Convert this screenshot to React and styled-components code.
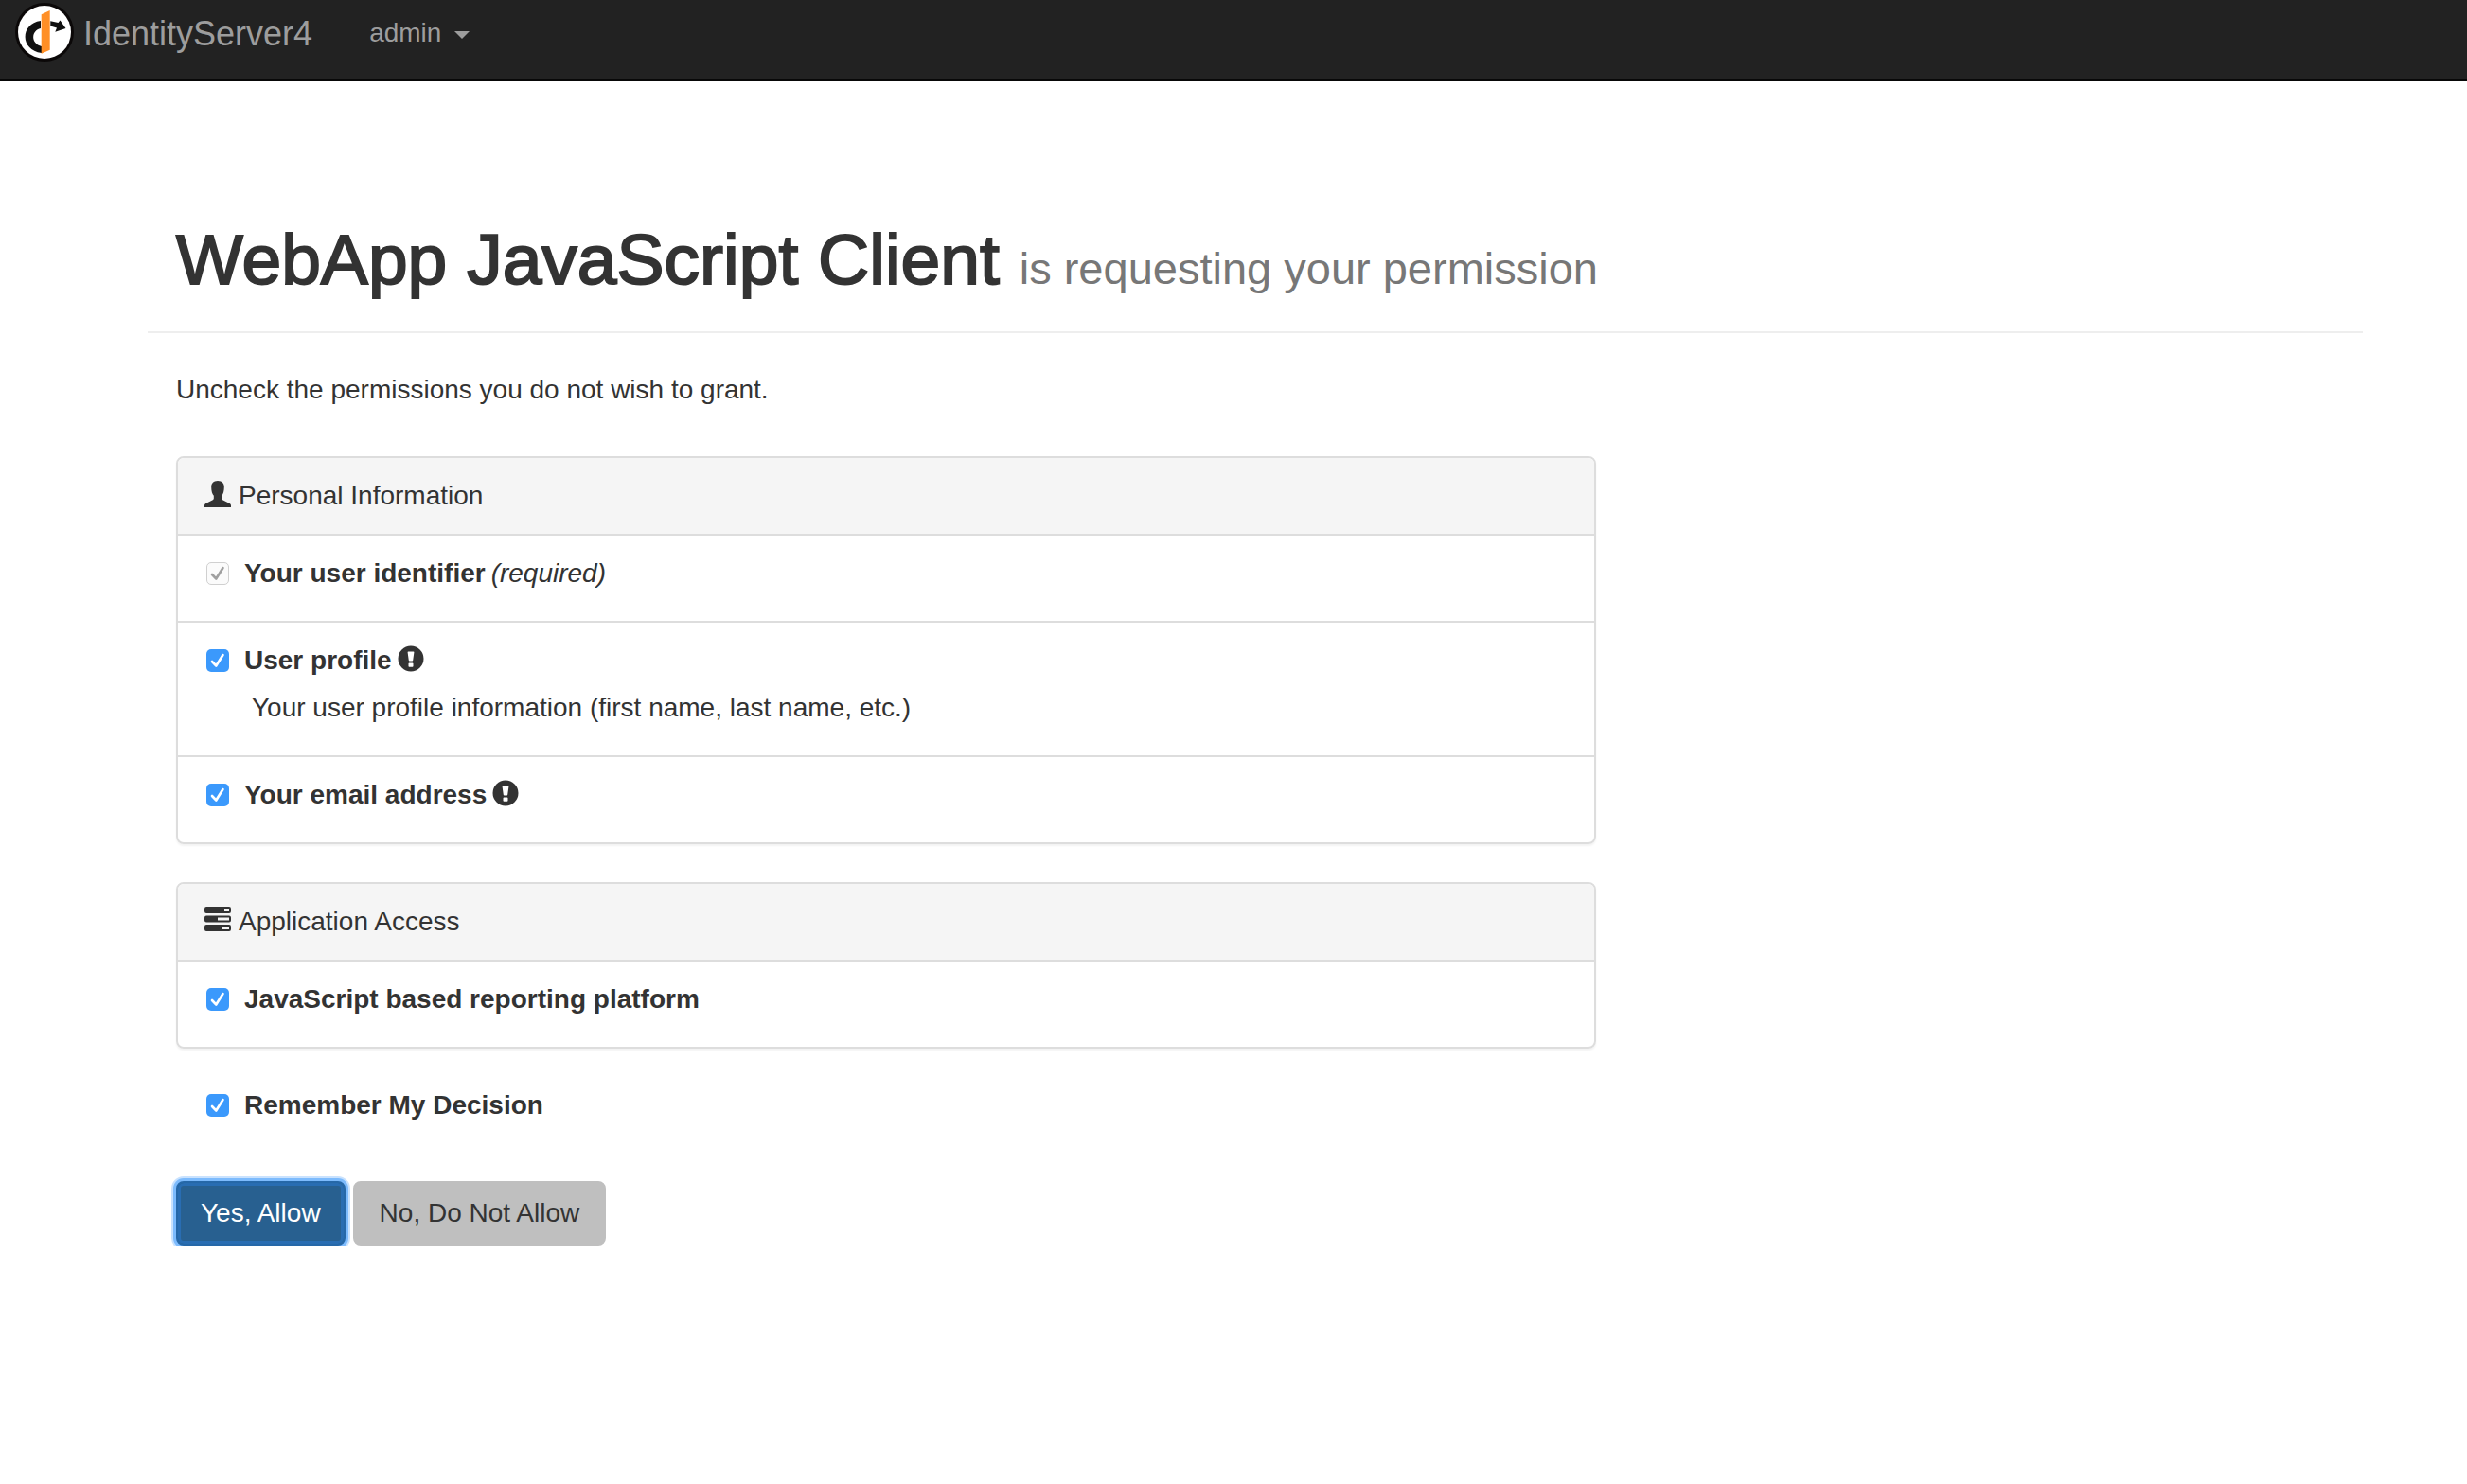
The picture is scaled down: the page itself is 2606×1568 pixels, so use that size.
import React from "react";
import styled, { createGlobalStyle, css } from "styled-components";

const GlobalStyle = createGlobalStyle`
  *, *::before, *::after { box-sizing: border-box; }
  body {
    margin: 0;
    background: #fff;
    color: #333;
    font-family: "Liberation Sans", "Helvetica Neue", Helvetica, Arial, sans-serif;
    font-size: 28px;
    line-height: 40px;
  }
`;

const Navbar = styled.header`
  display: flex;
  align-items: flex-start;
  height: 86px;
  padding: 0 16px;
  background: #222;
  border-bottom: 2px solid #080808;
`;

const Brand = styled.a`
  display: flex;
  align-items: center;
  gap: 10px;
  height: 72px;
  color: #9d9d9d;
  font-size: 36px;
  text-decoration: none;
`;

const Logo = styled.svg`
  width: 62px;
  height: 62px;
  margin-bottom: 4px;
`;

const UserMenu = styled.button`
  display: flex;
  align-items: center;
  gap: 14px;
  height: 70px;
  margin-left: 60px;
  padding: 0;
  border: 0;
  background: none;
  color: #9d9d9d;
  font: inherit;
  cursor: pointer;
`;

const Caret = styled.span`
  margin-top: 4px;
  border-top: 8px solid currentColor;
  border-left: 8px solid transparent;
  border-right: 8px solid transparent;
`;

const Page = styled.main`
  padding: 136px 110px 0 156px;
`;

const PageHeader = styled.div`
  padding: 12px 30px 36px;
  border-bottom: 2px solid #eee;
`;

const Title = styled.h1`
  margin: 0;
  font-size: 75px;
  font-weight: 400;
  line-height: 80px;
  -webkit-text-stroke: 2px currentColor;
`;

const Subtitle = styled.small`
  color: #777;
  font-size: 47px;
  line-height: 48px;
  -webkit-text-stroke: 0;
`;

const Form = styled.form`
  width: 66.6667%;
  padding: 0 30px;
`;

const Intro = styled.p`
  margin: 40px 0 50px;
`;

const Panel = styled.section`
  margin-bottom: 40px;
  border: 2px solid #ddd;
  border-radius: 8px;
  box-shadow: 0 2px 2px rgba(0, 0, 0, 0.05);
  overflow: hidden;
`;

const PanelHeading = styled.h2`
  display: flex;
  align-items: center;
  gap: 8px;
  margin: 0;
  padding: 20px 28px;
  background: #f5f5f5;
  font-size: 28px;
  font-weight: 400;
`;

const ScopeList = styled.ul`
  margin: 0;
  padding: 0;
  list-style: none;
`;

const Scope = styled.li`
  padding: 20px 30px 30px;
  border-top: 2px solid #ddd;
`;

const Line = styled.div`
  display: flex;
  align-items: center;
  gap: 6px;
`;

const Label = styled.label`
  display: flex;
  align-items: center;
  gap: 16px;
  font-weight: 700;
`;

const Tick = styled.input`
  appearance: none;
  width: 24px;
  height: 24px;
  margin: 0;
  border-radius: 5px;
  background: #3b99fc
    url("data:image/svg+xml,%3Csvg xmlns='http://www.w3.org/2000/svg' viewBox='0 0 24 24'%3E%3Cpath d='M6 13l4.300 4.500L17.500 6' fill='none' stroke='white' stroke-width='2.6' stroke-linecap='round' stroke-linejoin='round'/%3E%3C/svg%3E")
    center / 24px;

  &:disabled {
    border: 1px solid #d0d0d0;
    background: #fbfbfb
      url("data:image/svg+xml,%3Csvg xmlns='http://www.w3.org/2000/svg' viewBox='0 0 24 24'%3E%3Cpath d='M6 13l4.300 4.500L17.500 6' fill='none' stroke='%23a0a0a0' stroke-width='2.6' stroke-linecap='round' stroke-linejoin='round'/%3E%3C/svg%3E")
      center / 24px;
  }
`;

const Description = styled.p`
  margin: 10px 0 0;
  padding-left: 48px;
`;

const Icon = styled.svg`
  width: 28px;
  height: 28px;
  margin-bottom: 4px;
  fill: currentColor;
`;

const Remember = styled.div`
  padding: 0 32px;
`;

const Actions = styled.div`
  display: flex;
  gap: 8px;
  margin-top: 60px;
`;

const Button = styled.button`
  height: 68px;
  padding: 0 26px;
  border: 2px solid #bfbfbf;
  border-radius: 8px;
  background: #bfbfbf;
  color: #333;
  font: inherit;
  cursor: pointer;

  ${({ $primary }) =>
    $primary &&
    css`
      padding: 0 24px;
      border-color: #2668a8;
      background: #286090;
      color: #fff;
      box-shadow: 0 0 0 3px #7dbbfd, 0 0 0 5px #c9e2fe, inset 0 0 0 3px #296db2;
    `}
`;

function UserIcon() {
  return (
    <Icon viewBox="0 0 28 28" aria-hidden="true">
      <path d="M14 0c4.300 0 6.800 2.400 6.800 6.500 0 4.500-1 7.500-2.600 9.300v2.800c0 .8.3 1.200 1 1.600l6.900 3.500c1.300.7 1.900 1.300 1.900 2.500V28H0v-1.800c0-1.200.6-1.800 1.900-2.500l6.900-3.500c.7-.4 1-.8 1-1.600v-2.800C8.200 14 7.200 11 7.200 6.500 7.200 2.400 9.700 0 14 0z" />
    </Icon>
  );
}

function TasksIcon() {
  return (
    <Icon viewBox="0 0 28 28" aria-hidden="true">
      <path
        fillRule="evenodd"
        d="M2 0h24a2 2 0 0 1 2 2v3a2 2 0 0 1-2 2H2a2 2 0 0 1-2-2V2a2 2 0 0 1 2-2zM21 2v3h5V2zM2 9.500h24a2 2 0 0 1 2 2v3a2 2 0 0 1-2 2H2a2 2 0 0 1-2-2v-3a2 2 0 0 1 2-2zM14 11.500v3h12v-3zM2 19h24a2 2 0 0 1 2 2v3a2 2 0 0 1-2 2H2a2 2 0 0 1-2-2v-3a2 2 0 0 1 2-2zM18 21v3h8v-3z"
      />
    </Icon>
  );
}

function AlertIcon() {
  return (
    <Icon viewBox="0 0 28 28" role="img" aria-label="Emphasized permission">
      <path
        fillRule="evenodd"
        d="M14 .5a13.500 13.500 0 1 0 0 27 13.500 13.500 0 0 0 0-27zM11.300 6.500h5.400c.5 0 .8.3.7.800l-1.200 8.400c-.1.500-.4.800-.8.800h-2.800c-.4 0-.7-.3-.8-.8l-1.200-8.400c-.1-.5.200-.8.700-.8zM12.300 18.500h3.400c.4 0 .8.400.8.800v2.600c0 .4-.4.800-.8.800h-3.400c-.4 0-.8-.4-.8-.8v-2.600c0-.4.4-.8.8-.8z"
      />
    </Icon>
  );
}

function LogoMark() {
  return (
    <Logo viewBox="0 0 62 62" aria-hidden="true">
      <circle cx="31" cy="31" r="31" fill="#0b0808" />
      <circle cx="31" cy="31" r="28" fill="#fff" />
      <path d="M27 19C5 22 5 50 28 53v-7C16 43 17 29 27 27z" fill="#111" />
      <path d="M37.300 19.300l8.200 1.700 2-2.500 6 8.500-11.200 3.700 1.700-4.200-6.700-2z" fill="#111" />
      <path d="M27.700 12.300l9-4.300v41.700l-9 4z" fill="#ff8f26" />
    </Logo>
  );
}

function ScopeItem({ id, name, required, emphasize, description }) {
  return (
    <Scope>
      <Line>
        <Label htmlFor={id}>
          <Tick type="checkbox" id={id} defaultChecked disabled={required} />
          {name}
        </Label>
        {required && <em>(required)</em>}
        {emphasize && <AlertIcon />}
      </Line>
      {description && <Description>{description}</Description>}
    </Scope>
  );
}

export default function App() {
  return (
    <>
      <GlobalStyle />
      <Navbar>
        <Brand href="#">
          <LogoMark />
          IdentityServer4
        </Brand>
        <UserMenu type="button" aria-haspopup="menu">
          admin
          <Caret />
        </UserMenu>
      </Navbar>
      <Page>
        <PageHeader>
          <Title>
            WebApp JavaScript Client <Subtitle>is requesting your permission</Subtitle>
          </Title>
        </PageHeader>
        <Form onSubmit={(event) => event.preventDefault()}>
          <Intro>Uncheck the permissions you do not wish to grant.</Intro>
          <Panel>
            <PanelHeading>
              <UserIcon />
              Personal Information
            </PanelHeading>
            <ScopeList>
              <ScopeItem id="openid" name="Your user identifier" required />
              <ScopeItem
                id="profile"
                name="User profile"
                emphasize
                description="Your user profile information (first name, last name, etc.)"
              />
              <ScopeItem id="email" name="Your email address" emphasize />
            </ScopeList>
          </Panel>
          <Panel>
            <PanelHeading>
              <TasksIcon />
              Application Access
            </PanelHeading>
            <ScopeList>
              <ScopeItem id="reporting" name="JavaScript based reporting platform" />
            </ScopeList>
          </Panel>
          <Remember>
            <Label htmlFor="remember">
              <Tick type="checkbox" id="remember" defaultChecked />
              Remember My Decision
            </Label>
          </Remember>
          <Actions>
            <Button type="submit" $primary>
              Yes, Allow
            </Button>
            <Button type="button">No, Do Not Allow</Button>
          </Actions>
        </Form>
      </Page>
    </>
  );
}
